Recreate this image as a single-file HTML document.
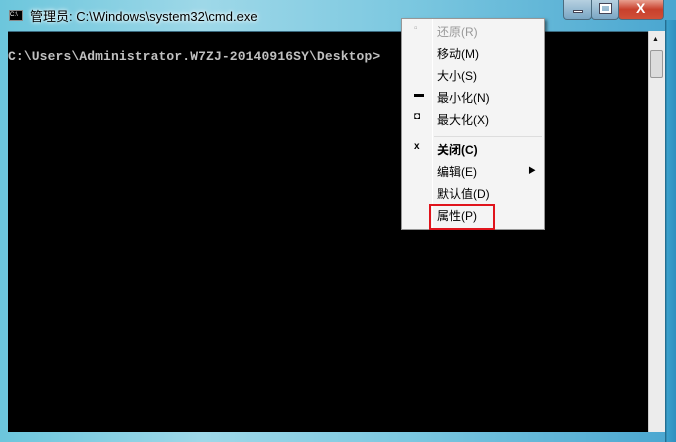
<!DOCTYPE html><html><head><meta charset="utf-8"><style>
*{margin:0;padding:0;box-sizing:border-box}
body{width:676px;height:442px;overflow:hidden;position:relative;background:linear-gradient(90deg,#6cc6dc,#9ed8e8 30%,#7cc8e0 60%,#4aa6d0 100%);font-family:"Liberation Sans","Noto Sans CJK SC",sans-serif}
.title{position:absolute;left:30px;top:6px;font-size:13px;color:#000;text-shadow:0 0 6px #fff,0 0 3px #fff}
.ico{position:absolute;left:9px;top:10px;width:14px;height:11px;background:#000;border:1px solid #888;font-size:6px;color:#fff;line-height:9px}
.con{position:absolute;left:8px;top:31px;width:640px;height:401px;background:#000;border-top:1px solid #3a6a80}
.txt{position:absolute;left:8px;top:49px;color:#c0c0c0;font:13px "Liberation Mono",monospace;letter-spacing:0.12px;font-weight:bold}
.sb{position:absolute;left:648px;top:31px;width:17px;height:401px;background:#ececec;border-left:1px solid #ccc}
.thumb{position:absolute;left:650px;top:50px;width:13px;height:28px;background:#dcdcdc;border:1px solid #999;border-radius:2px}
.fr{position:absolute;left:665px;top:20px;width:11px;height:422px;background:linear-gradient(90deg,#1e5f80,#3aa0cc 20%,#2f8fbf)}
.btn{position:absolute;top:0;height:20px;border:1px solid #4a6c80;border-top:none;border-radius:0 0 4px 4px}
.menu{position:absolute;left:401px;top:18px;width:144px;height:212px;background:#f4f4f4;border:1px solid #979797;box-shadow:2px 2px 3px rgba(0,0,0,.5);font-size:12px}
.menu .sep{position:absolute;left:30px;top:0;width:1px;height:100%;background:#e2e2e2;border-right:1px solid #fff}
.it{position:absolute;left:35px;color:#000}
.ic{position:absolute;left:12px;font-size:10px}
.hl{position:absolute;left:429px;top:204px;width:66px;height:26px;border:2px solid #e0141c}
</style></head><body>
<div class="ico">C:\</div>
<div class="title">管理员: C:\Windows\system32\cmd.exe</div>
<div class="btn" style="left:563px;width:29px;background:linear-gradient(#b6d0e0,#7aa6c4)"><div style="position:absolute;left:9px;top:10px;width:10px;height:3px;background:#fff;border:1px solid #445"></div></div>
<div class="btn" style="left:591px;width:28px;background:linear-gradient(#b6d0e0,#7aa6c4)"><div style="position:absolute;left:8px;top:4px;width:11px;height:9px;border:2px solid #fff;outline:1px solid #445"></div></div>
<div class="btn" style="left:618px;width:46px;background:linear-gradient(#e8a090,#c8402c 50%,#d05038)"><div style="position:absolute;left:17px;top:0;color:#fff;font-weight:bold;font-size:14px">X</div></div>
<div class="con"></div>
<div class="txt">C:\Users\Administrator.W7ZJ-20140916SY\Desktop&gt;</div>
<div class="sb"></div>
<div style="position:absolute;left:652px;top:36px;font-size:7px;color:#111">▲</div>
<div class="thumb"></div>
<div class="fr"></div>
<div class="menu"><div class="sep"></div>
<span class="ic" style="top:4px;color:#aaa">▫</span><span class="it" style="top:4px;color:#999">还原(R)</span>
<span class="it" style="top:26px">移动(M)</span>
<span class="it" style="top:48px">大小(S)</span>
<span class="ic" style="top:70px">▬</span><span class="it" style="top:70px">最小化(N)</span>
<span class="ic" style="top:92px">◘</span><span class="it" style="top:92px">最大化(X)</span>
<div style="position:absolute;left:32px;top:117px;width:108px;height:1px;background:#ddd"></div>
<span class="ic" style="top:122px;font-weight:bold">x</span><span class="it" style="top:122px;font-weight:bold">关闭(C)</span>
<span class="it" style="top:144px">编辑(E)</span><span style="position:absolute;left:126px;top:146px;font-size:8px">▶</span>
<span class="it" style="top:166px">默认值(D)</span>
<span class="it" style="top:188px">属性(P)</span>
</div>
<div class="hl"></div>
</body></html>
